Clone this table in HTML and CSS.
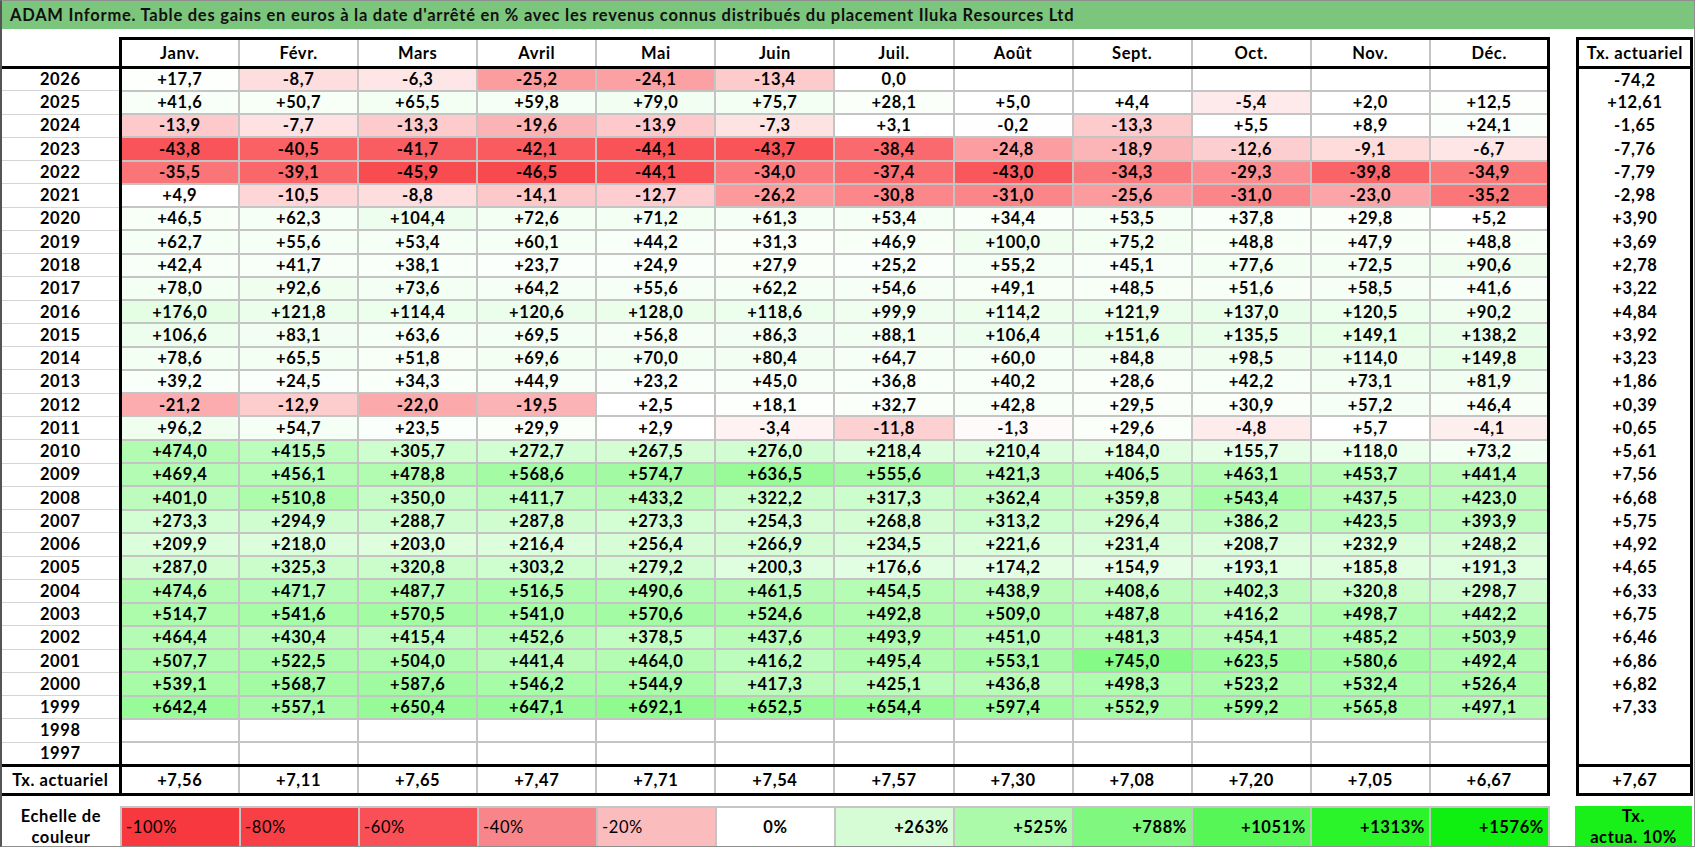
FILE: index.html
```html
<!DOCTYPE html>
<html lang="fr">
<head>
<meta charset="utf-8">
<title>ADAM Informe</title>
<link rel="stylesheet" href="styles.css">
</head>
<body>
<div class="frame">
  <div class="title">ADAM Informe. Table des gains en euros à la date d'arrêté en % avec les revenus connus distribués du placement Iluka Resources Ltd</div>
  <div class="main">
    <table class="grid" id="grid">
      <colgroup><col class="cy"><col class="cm"><col class="cm"><col class="cm"><col class="cm"><col class="cm"><col class="cm"><col class="cm"><col class="cm"><col class="cm"><col class="cm"><col class="cm"><col class="cm"></colgroup>
      <thead>
        <tr><th class="corner"></th><th>Janv.</th><th>Févr.</th><th>Mars</th><th>Avril</th><th>Mai</th><th>Juin</th><th>Juil.</th><th>Août</th><th>Sept.</th><th>Oct.</th><th>Nov.</th><th>Déc.</th></tr>
      </thead>
      <tbody>
        <tr><th>2026</th><td>+17,7</td><td>-8,7</td><td>-6,3</td><td>-25,2</td><td>-24,1</td><td>-13,4</td><td>0,0</td><td></td><td></td><td></td><td></td><td></td></tr>
        <tr><th>2025</th><td>+41,6</td><td>+50,7</td><td>+65,5</td><td>+59,8</td><td>+79,0</td><td>+75,7</td><td>+28,1</td><td>+5,0</td><td>+4,4</td><td>-5,4</td><td>+2,0</td><td>+12,5</td></tr>
        <tr><th>2024</th><td>-13,9</td><td>-7,7</td><td>-13,3</td><td>-19,6</td><td>-13,9</td><td>-7,3</td><td>+3,1</td><td>-0,2</td><td>-13,3</td><td>+5,5</td><td>+8,9</td><td>+24,1</td></tr>
        <tr><th>2023</th><td>-43,8</td><td>-40,5</td><td>-41,7</td><td>-42,1</td><td>-44,1</td><td>-43,7</td><td>-38,4</td><td>-24,8</td><td>-18,9</td><td>-12,6</td><td>-9,1</td><td>-6,7</td></tr>
        <tr><th>2022</th><td>-35,5</td><td>-39,1</td><td>-45,9</td><td>-46,5</td><td>-44,1</td><td>-34,0</td><td>-37,4</td><td>-43,0</td><td>-34,3</td><td>-29,3</td><td>-39,8</td><td>-34,9</td></tr>
        <tr><th>2021</th><td>+4,9</td><td>-10,5</td><td>-8,8</td><td>-14,1</td><td>-12,7</td><td>-26,2</td><td>-30,8</td><td>-31,0</td><td>-25,6</td><td>-31,0</td><td>-23,0</td><td>-35,2</td></tr>
        <tr><th>2020</th><td>+46,5</td><td>+62,3</td><td>+104,4</td><td>+72,6</td><td>+71,2</td><td>+61,3</td><td>+53,4</td><td>+34,4</td><td>+53,5</td><td>+37,8</td><td>+29,8</td><td>+5,2</td></tr>
        <tr><th>2019</th><td>+62,7</td><td>+55,6</td><td>+53,4</td><td>+60,1</td><td>+44,2</td><td>+31,3</td><td>+46,9</td><td>+100,0</td><td>+75,2</td><td>+48,8</td><td>+47,9</td><td>+48,8</td></tr>
        <tr><th>2018</th><td>+42,4</td><td>+41,7</td><td>+38,1</td><td>+23,7</td><td>+24,9</td><td>+27,9</td><td>+25,2</td><td>+55,2</td><td>+45,1</td><td>+77,6</td><td>+72,5</td><td>+90,6</td></tr>
        <tr><th>2017</th><td>+78,0</td><td>+92,6</td><td>+73,6</td><td>+64,2</td><td>+55,6</td><td>+62,2</td><td>+54,6</td><td>+49,1</td><td>+48,5</td><td>+51,6</td><td>+58,5</td><td>+41,6</td></tr>
        <tr><th>2016</th><td>+176,0</td><td>+121,8</td><td>+114,4</td><td>+120,6</td><td>+128,0</td><td>+118,6</td><td>+99,9</td><td>+114,2</td><td>+121,9</td><td>+137,0</td><td>+120,5</td><td>+90,2</td></tr>
        <tr><th>2015</th><td>+106,6</td><td>+83,1</td><td>+63,6</td><td>+69,5</td><td>+56,8</td><td>+86,3</td><td>+88,1</td><td>+106,4</td><td>+151,6</td><td>+135,5</td><td>+149,1</td><td>+138,2</td></tr>
        <tr><th>2014</th><td>+78,6</td><td>+65,5</td><td>+51,8</td><td>+69,6</td><td>+70,0</td><td>+80,4</td><td>+64,7</td><td>+60,0</td><td>+84,8</td><td>+98,5</td><td>+114,0</td><td>+149,8</td></tr>
        <tr><th>2013</th><td>+39,2</td><td>+24,5</td><td>+34,3</td><td>+44,9</td><td>+23,2</td><td>+45,0</td><td>+36,8</td><td>+40,2</td><td>+28,6</td><td>+42,2</td><td>+73,1</td><td>+81,9</td></tr>
        <tr><th>2012</th><td>-21,2</td><td>-12,9</td><td>-22,0</td><td>-19,5</td><td>+2,5</td><td>+18,1</td><td>+32,7</td><td>+42,8</td><td>+29,5</td><td>+30,9</td><td>+57,2</td><td>+46,4</td></tr>
        <tr><th>2011</th><td>+96,2</td><td>+54,7</td><td>+23,5</td><td>+29,9</td><td>+2,9</td><td>-3,4</td><td>-11,8</td><td>-1,3</td><td>+29,6</td><td>-4,8</td><td>+5,7</td><td>-4,1</td></tr>
        <tr><th>2010</th><td>+474,0</td><td>+415,5</td><td>+305,7</td><td>+272,7</td><td>+267,5</td><td>+276,0</td><td>+218,4</td><td>+210,4</td><td>+184,0</td><td>+155,7</td><td>+118,0</td><td>+73,2</td></tr>
        <tr><th>2009</th><td>+469,4</td><td>+456,1</td><td>+478,8</td><td>+568,6</td><td>+574,7</td><td>+636,5</td><td>+555,6</td><td>+421,3</td><td>+406,5</td><td>+463,1</td><td>+453,7</td><td>+441,4</td></tr>
        <tr><th>2008</th><td>+401,0</td><td>+510,8</td><td>+350,0</td><td>+411,7</td><td>+433,2</td><td>+322,2</td><td>+317,3</td><td>+362,4</td><td>+359,8</td><td>+543,4</td><td>+437,5</td><td>+423,0</td></tr>
        <tr><th>2007</th><td>+273,3</td><td>+294,9</td><td>+288,7</td><td>+287,8</td><td>+273,3</td><td>+254,3</td><td>+268,8</td><td>+313,2</td><td>+296,4</td><td>+386,2</td><td>+423,5</td><td>+393,9</td></tr>
        <tr><th>2006</th><td>+209,9</td><td>+218,0</td><td>+203,0</td><td>+216,4</td><td>+256,4</td><td>+266,9</td><td>+234,5</td><td>+221,6</td><td>+231,4</td><td>+208,7</td><td>+232,9</td><td>+248,2</td></tr>
        <tr><th>2005</th><td>+287,0</td><td>+325,3</td><td>+320,8</td><td>+303,2</td><td>+279,2</td><td>+200,3</td><td>+176,6</td><td>+174,2</td><td>+154,9</td><td>+193,1</td><td>+185,8</td><td>+191,3</td></tr>
        <tr><th>2004</th><td>+474,6</td><td>+471,7</td><td>+487,7</td><td>+516,5</td><td>+490,6</td><td>+461,5</td><td>+454,5</td><td>+438,9</td><td>+408,6</td><td>+402,3</td><td>+320,8</td><td>+298,7</td></tr>
        <tr><th>2003</th><td>+514,7</td><td>+541,6</td><td>+570,5</td><td>+541,0</td><td>+570,6</td><td>+524,6</td><td>+492,8</td><td>+509,0</td><td>+487,8</td><td>+416,2</td><td>+498,7</td><td>+442,2</td></tr>
        <tr><th>2002</th><td>+464,4</td><td>+430,4</td><td>+415,4</td><td>+452,6</td><td>+378,5</td><td>+437,6</td><td>+493,9</td><td>+451,0</td><td>+481,3</td><td>+454,1</td><td>+485,2</td><td>+503,9</td></tr>
        <tr><th>2001</th><td>+507,7</td><td>+522,5</td><td>+504,0</td><td>+441,4</td><td>+464,0</td><td>+416,2</td><td>+495,4</td><td>+553,1</td><td>+745,0</td><td>+623,5</td><td>+580,6</td><td>+492,4</td></tr>
        <tr><th>2000</th><td>+539,1</td><td>+568,7</td><td>+587,6</td><td>+546,2</td><td>+544,9</td><td>+417,3</td><td>+425,1</td><td>+436,8</td><td>+498,3</td><td>+523,2</td><td>+532,4</td><td>+526,4</td></tr>
        <tr><th>1999</th><td>+642,4</td><td>+557,1</td><td>+650,4</td><td>+647,1</td><td>+692,1</td><td>+652,5</td><td>+654,4</td><td>+597,4</td><td>+552,9</td><td>+599,2</td><td>+565,8</td><td>+497,1</td></tr>
        <tr><th>1998</th><td></td><td></td><td></td><td></td><td></td><td></td><td></td><td></td><td></td><td></td><td></td><td></td></tr>
        <tr><th>1997</th><td></td><td></td><td></td><td></td><td></td><td></td><td></td><td></td><td></td><td></td><td></td><td></td></tr>
      </tbody>
      <tfoot>
        <tr><th>Tx. actuariel</th><td>+7,56</td><td>+7,11</td><td>+7,65</td><td>+7,47</td><td>+7,71</td><td>+7,54</td><td>+7,57</td><td>+7,30</td><td>+7,08</td><td>+7,20</td><td>+7,05</td><td>+6,67</td></tr>
      </tfoot>
    </table>
    <table class="tx">
      <thead><tr><th>Tx. actuariel</th></tr></thead>
      <tbody>
        <tr><td>-74,2</td></tr><tr><td>+12,61</td></tr><tr><td>-1,65</td></tr><tr><td>-7,76</td></tr><tr><td>-7,79</td></tr>
        <tr><td>-2,98</td></tr><tr><td>+3,90</td></tr><tr><td>+3,69</td></tr><tr><td>+2,78</td></tr><tr><td>+3,22</td></tr>
        <tr><td>+4,84</td></tr><tr><td>+3,92</td></tr><tr><td>+3,23</td></tr><tr><td>+1,86</td></tr><tr><td>+0,39</td></tr>
        <tr><td>+0,65</td></tr><tr><td>+5,61</td></tr><tr><td>+7,56</td></tr><tr><td>+6,68</td></tr><tr><td>+5,75</td></tr>
        <tr><td>+4,92</td></tr><tr><td>+4,65</td></tr><tr><td>+6,33</td></tr><tr><td>+6,75</td></tr><tr><td>+6,46</td></tr>
        <tr><td>+6,86</td></tr><tr><td>+6,82</td></tr><tr><td>+7,33</td></tr><tr><td></td></tr><tr><td></td></tr>
      </tbody>
      <tfoot><tr><td>+7,67</td></tr></tfoot>
    </table>
  </div>
  <div class="legend">
    <div class="lab">Echelle de<br>couleur</div>
    <div class="scale">
      <div class="sc neg n100">-100%</div>
      <div class="sc neg n80">-80%</div>
      <div class="sc neg n60">-60%</div>
      <div class="sc neg n40">-40%</div>
      <div class="sc neg n20">-20%</div>
      <div class="sc zero">0%</div>
      <div class="sc pos p1">+263%</div>
      <div class="sc pos p2">+525%</div>
      <div class="sc pos p3">+788%</div>
      <div class="sc pos p4">+1051%</div>
      <div class="sc pos p5">+1313%</div>
      <div class="sc pos p6">+1576%</div>
    </div>
    <div class="txl">Tx.<br>actua. 10%</div>
  </div>
</div>
<script src="app.js"></script>
</body>
</html>
```

FILE: styles.css
```css
* { box-sizing: border-box; }
html, body { margin: 0; padding: 0; background: #fff; }
body {
  font-family: Lato, "Open Sans", "Liberation Sans", sans-serif;
  font-weight: 700;
  color: #000;
  font-size: 16.5px;
  letter-spacing: 0.6px;
}
.frame {
  width: 1695px;
  height: 847px;
  border: 1px solid #8e8e8e;
  border-left: 2px solid #555;
  display: flex;
  flex-direction: column;
  overflow: hidden;
}
.title {
  height: 28px;
  line-height: 29px;
  background: #7cc57c;
  color: #111;
  padding-left: 8px;
  font-size: 16.5px;
  white-space: nowrap;
  letter-spacing: 0.75px;
}
.main {
  display: flex;
  align-items: flex-start;
  gap: 26px;
  margin-top: 8px;
}
table { border-collapse: collapse; table-layout: fixed; }
.grid { width: 1547px; }
.cy { width: 118px; }
.cm { width: 119.08px; }
.grid th, .grid td {
  padding: 0;
  text-align: center;
  white-space: nowrap;
  overflow: hidden;
  font-weight: 700;
  line-height: 1;
}
.grid thead tr { height: 29px; }
.grid tbody tr { height: 23.27px; }
.grid tfoot tr { height: 29px; }
.grid thead th {
  border-top: 3px solid #000;
  border-bottom: 3px solid #000;
  border-left: 2px solid #c4c4c4;
  border-right: 2px solid #c4c4c4;
}
.grid thead th.corner {
  border-top: none;
  border-left: none;
  border-right: 3px solid #000;
}
.grid td {
  border: 2px solid #c4c4c4;
  background: #fff;
}
.grid tbody th {
  border-top: 1px solid #d4d4d4;
  border-bottom: 1px solid #d4d4d4;
  border-right: 3px solid #000;
}
.grid td:last-child, .grid thead th:last-child { border-right: 3px solid #000; }
.grid tfoot th, .grid tfoot td {
  border-top: 3px solid #000;
  border-bottom: 3px solid #000;
}
.grid tfoot th { border-right: 3px solid #000; }

.tx { width: 117px; border: 3px solid #000; }
.tx th, .tx td {
  padding: 0;
  text-align: center;
  white-space: nowrap;
  font-weight: 700;
  line-height: 1;
  border: none;
}
.tx thead tr { height: 29px; }
.tx thead th { border-bottom: 3px solid #000; }
.tx tbody tr { height: 23.27px; }
.tx tfoot tr { height: 29px; }
.tx tfoot td { border-top: 3px solid #000; }

.legend {
  display: flex;
  height: 42px;
  margin-top: 10px;
}
.lab {
  width: 118px;
  text-align: center;
  line-height: 21px;
  padding-top: 0;
}
.scale {
  display: flex;
  width: 1430px;
  border-top: 2px solid #c4c4c4;
  border-bottom: 2px solid #c4c4c4;
  border-left: 2px solid #c4c4c4;
}
.sc {
  flex: 1 1 0;
  border-right: 2px solid #c4c4c4;
  display: flex;
  align-items: center;
  padding: 0 4px;
  white-space: nowrap;
}
.sc.neg { font-weight: 400; justify-content: flex-start; }
.sc.zero { justify-content: center; }
.sc.pos { justify-content: flex-end; }
.n100 { background: #f7383e; }
.n80 { background: #f83f45; }
.n60 { background: #f85056; }
.n40 { background: #f88589; }
.n20 { background: #fbbcbe; }
.zero { background: #fff; }
.p1 { background: #d5fcd5; }
.p2 { background: #aafaaa; }
.p3 { background: #80f880; }
.p4 { background: #55f655; }
.p5 { background: #2bf42b; }
.p6 { background: #10f010; }
.txl {
  width: 117px;
  margin-left: 25px;
  background: #19ef19;
  text-align: center;
  line-height: 21px;
}
```

FILE: app.js
```js
document.querySelectorAll('#grid tbody td').forEach(function (td) {
  var s = td.textContent.trim();
  if (!s) return;
  var v = parseFloat(s.replace(',', '.'));
  var r, g, b, t;
  if (v < 0) {
    t = Math.min(1, -v / 50);
    r = 255 - 7 * t; g = 255 - 195 * t; b = 255 - 190 * t;
  } else {
    t = Math.min(1, v / 1576);
    r = 255 - 255 * t; g = 255 - 10 * t; b = r;
  }
  td.style.backgroundColor = 'rgb(' + Math.round(r) + ',' + Math.round(g) + ',' + Math.round(b) + ')';
});
```
